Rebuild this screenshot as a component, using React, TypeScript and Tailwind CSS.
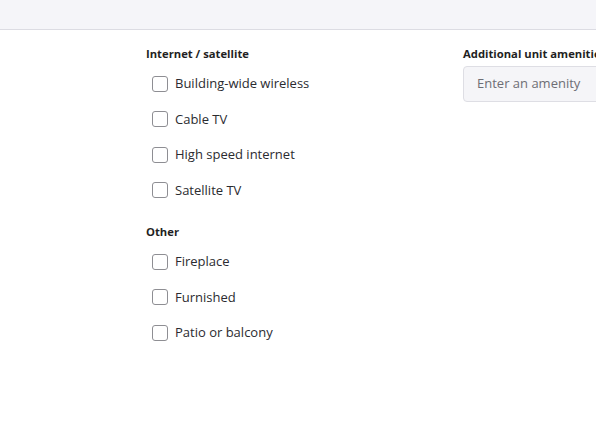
import React from "react";

const groups = [
  {
    title: "Internet / satellite",
    items: ["Building-wide wireless", "Cable TV", "High speed internet", "Satellite TV"],
  },
  {
    title: "Other",
    items: ["Fireplace", "Furnished", "Patio or balcony"],
  },
];

const Check = ({ label }: { label: string }) => (
  <label className="flex items-center h-[35.5px] pl-[6px] gap-[7px] cursor-pointer">
    <span className="w-[16px] h-[16px] rounded-[3px] border-[1.5px] border-[#8e8e93] bg-white shrink-0" />
    <span className="text-[13px] text-[#2b2b30]">{label}</span>
  </label>
);

export default function App() {
  return (
    <div className="w-[596px] h-[446px] bg-white overflow-hidden" style={{ fontFamily: '"Open Sans", sans-serif' }}>
      <div className="h-[30px] bg-[#f5f5f9] border-b border-[#dcdce3]" />
      <div className="flex pl-[146px] pt-[15px]">
        <div className="w-[317px] shrink-0">
          {groups.map((g, i) => (
            <div key={g.title} className={i > 0 ? "mt-[15px]" : ""}>
              <div className="text-[11.25px] font-bold text-[#1f1f23] leading-[18px]">{g.title}</div>
              <div className="mt-[3px]">
                {g.items.map((it) => (
                  <Check key={it} label={it} />
                ))}
              </div>
            </div>
          ))}
        </div>
        <div className="shrink-0 w-[220px]">
          <div className="text-[11.25px] font-bold text-[#1f1f23] leading-[18px] whitespace-nowrap">Additional unit amenities</div>
          <div className="mt-[3px] h-[36px] rounded-[4px] border border-[#dedee4] bg-[#f5f5f8] flex items-center px-[13px]">
            <span className="text-[13px] text-[#6e6e75]">Enter an amenity</span>
          </div>
        </div>
      </div>
    </div>
  );
}
